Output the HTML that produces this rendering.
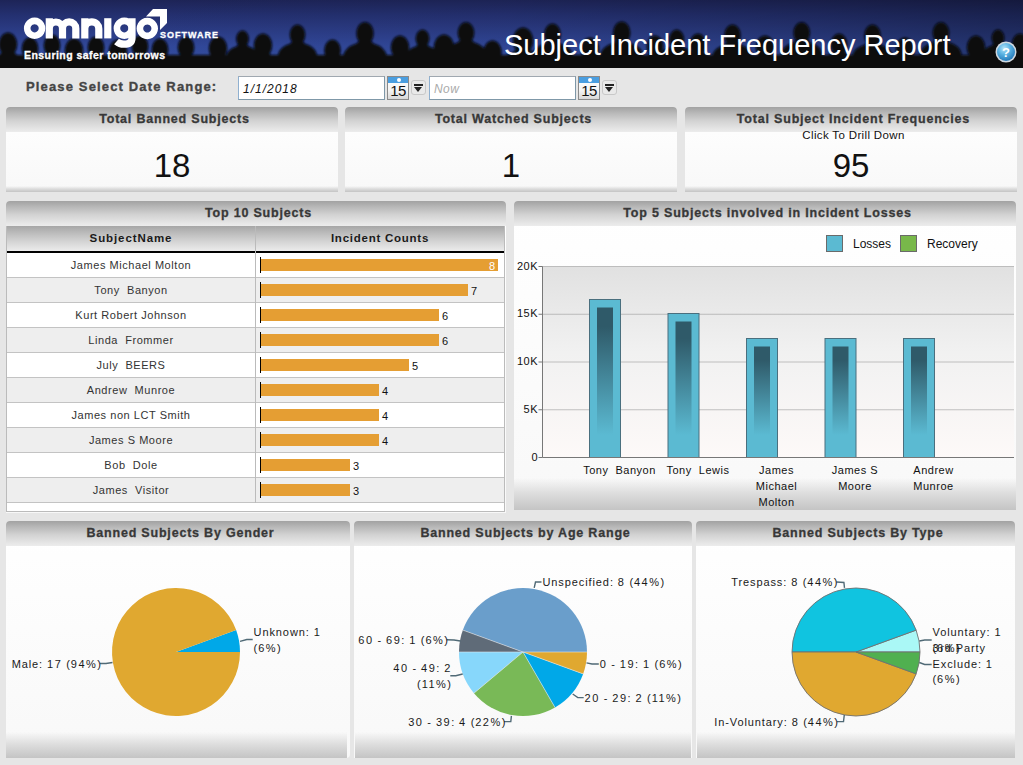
<!DOCTYPE html><html><head><meta charset="utf-8"><style>
*{margin:0;padding:0;box-sizing:border-box}
html,body{width:1023px;height:765px;overflow:hidden;background:#e6e6e6;font-family:"Liberation Sans",sans-serif;color:#222}
.a{position:absolute}
#hdr{position:absolute;left:0;top:0;width:1023px;height:68px;background:linear-gradient(180deg,#1b2462 0%,#27388a 45%,#2d4496 70%,#1a2258 100%);overflow:hidden}
.panel{position:absolute;border-radius:4px 4px 0 0;background:linear-gradient(180deg,#fff 0%,#fbfbfb 60%,#f8f8f8 100%);overflow:hidden}
.ph{position:absolute;left:0;top:0;right:0;height:25px;background:linear-gradient(180deg,#a2a2a2 0%,#b9b9b9 25%,#d2d2d2 55%,#e4e4e4 85%,#ececec 100%);font-weight:bold;font-size:12.5px;letter-spacing:0.8px;color:#383838;-webkit-text-stroke:0.3px #383838;text-align:center;line-height:25px;white-space:pre;padding-left:5px}
.foot{position:absolute;left:0;right:0;bottom:0;background:linear-gradient(180deg,rgba(200,200,200,0) 0%,#dcdcdc 50%,#c4c4c4 100%)}
.big{position:absolute;left:0;right:0;text-align:center;font-size:33px;color:#111;margin-top:1.5px}
.t{position:absolute;white-space:pre;font-size:12px;color:#222}
.row{position:absolute;left:0;width:497px;height:25px;border-bottom:1px solid #c3c3c3}
.nm{position:absolute;left:0;width:248px;top:0;height:24px;line-height:24px;text-align:center;font-size:11px;letter-spacing:0.55px;color:#333;white-space:pre}
.bar{position:absolute;top:6px;height:12px;left:254px;background:#e59e33}
.ax{position:absolute;left:253px;top:4px;width:1px;height:16px;background:#000}
.val{position:absolute;top:0;line-height:24px;font-size:11px;color:#111;padding-top:0.5px}
.cl{position:absolute;font-size:11px;color:#1a1a1a;white-space:pre;line-height:16px;letter-spacing:0.9px}
</style></head><body>
<div id="hdr"><svg class="a" style="left:0;top:0" width="1023" height="68"><defs><linearGradient id="sky" x1="0" y1="0" x2="0" y2="1"><stop offset="0" stop-color="#1d2457"/><stop offset="0.22" stop-color="#243070"/><stop offset="0.45" stop-color="#2b3c85"/><stop offset="0.68" stop-color="#31489a"/><stop offset="1" stop-color="#3552a2"/></linearGradient><linearGradient id="skyh" x1="0" y1="0" x2="1" y2="0"><stop offset="0" stop-color="#000" stop-opacity="0"/><stop offset="0.5" stop-color="#000" stop-opacity="0.04"/><stop offset="0.8" stop-color="#000" stop-opacity="0.18"/><stop offset="1" stop-color="#000" stop-opacity="0.3"/></linearGradient><filter id="bl" x="-5%" y="-20%" width="110%" height="140%"><feGaussianBlur stdDeviation="1"/></filter><radialGradient id="help" cx="0.4" cy="0.3" r="0.75"><stop offset="0" stop-color="#b6e4f8"/><stop offset="0.45" stop-color="#5ab2e2"/><stop offset="1" stop-color="#1f74b6"/></radialGradient></defs><rect width="1023" height="68" fill="url(#sky)"/><rect width="1023" height="68" fill="url(#skyh)"/><g fill="#07080f" filter="url(#bl)"><ellipse cx="8" cy="44.5" rx="9.2" ry="12.0"/><path d="M-16.0,70 L-15.0,68.0 Q-13.0,58.5 -1.0,55.0 L3.0,51.0 L13.0,51.0 L17.0,55.0 Q29.0,58.5 31.0,68.0 L32.0,70 Z"/><ellipse cx="30" cy="48.4" rx="8.3" ry="10.8"/><path d="M8.4,70 L9.3,69.5 Q11.1,60.9 21.9,57.8 L25.5,54.2 L34.5,54.2 L38.1,57.8 Q48.9,60.9 50.7,69.5 L51.6,70 Z"/><ellipse cx="52" cy="45.4" rx="8.3" ry="10.8"/><path d="M30.4,70 L31.3,66.5 Q33.1,57.9 43.9,54.8 L47.5,51.2 L56.5,51.2 L60.1,54.8 Q70.9,57.9 72.7,66.5 L73.6,70 Z"/><ellipse cx="74" cy="50.5" rx="9.2" ry="12.0"/><path d="M50.0,70 L51.0,74.0 Q53.0,64.5 65.0,61.0 L69.0,57.0 L79.0,57.0 L83.0,61.0 Q95.0,64.5 97.0,74.0 L98.0,70 Z"/><ellipse cx="96" cy="47.4" rx="8.3" ry="10.8"/><path d="M74.4,70 L75.3,68.5 Q77.1,59.9 87.9,56.8 L91.5,53.2 L100.5,53.2 L104.1,56.8 Q114.9,59.9 116.7,68.5 L117.6,70 Z"/><ellipse cx="118" cy="51.5" rx="9.2" ry="12.0"/><path d="M94.0,70 L95.0,75.0 Q97.0,65.5 109.0,62.0 L113.0,58.0 L123.0,58.0 L127.0,62.0 Q139.0,65.5 141.0,75.0 L142.0,70 Z"/><ellipse cx="140" cy="46.4" rx="8.3" ry="10.8"/><path d="M118.4,70 L119.3,67.5 Q121.1,58.9 131.9,55.8 L135.5,52.2 L144.5,52.2 L148.1,55.8 Q158.9,58.9 160.7,67.5 L161.6,70 Z"/><ellipse cx="160" cy="49.4" rx="8.3" ry="10.8"/><path d="M138.4,70 L139.3,70.5 Q141.1,61.9 151.9,58.8 L155.5,55.2 L164.5,55.2 L168.1,58.8 Q178.9,61.9 180.7,70.5 L181.6,70 Z"/><ellipse cx="186" cy="47.4" rx="8.3" ry="10.8"/><path d="M164.4,70 L165.3,68.5 Q167.1,59.9 177.9,56.8 L181.5,53.2 L190.5,53.2 L194.1,56.8 Q204.9,59.9 206.7,68.5 L207.6,70 Z"/><ellipse cx="218" cy="48.5" rx="9.2" ry="12.0"/><path d="M194.0,70 L195.0,72.0 Q197.0,62.5 209.0,59.0 L213.0,55.0 L223.0,55.0 L227.0,59.0 Q239.0,62.5 241.0,72.0 L242.0,70 Z"/><ellipse cx="242.5" cy="39.0" rx="6.4" ry="8.4"/><path d="M225.7,70 L226.4,55.5 Q227.8,48.9 236.2,46.4 L239.0,43.6 L246.0,43.6 L248.8,46.4 Q257.2,48.9 258.6,55.5 L259.3,70 Z"/><ellipse cx="263" cy="45.5" rx="9.2" ry="12.0"/><path d="M239.0,70 L240.0,69.0 Q242.0,59.5 254.0,56.0 L258.0,52.0 L268.0,52.0 L272.0,56.0 Q284.0,59.5 286.0,69.0 L287.0,70 Z"/><ellipse cx="297.5" cy="34.8" rx="7.8" ry="10.2"/><path d="M277.1,70 L277.9,54.8 Q279.6,46.7 289.9,43.7 L293.2,40.3 L301.8,40.3 L305.1,43.7 Q315.4,46.7 317.1,54.8 L317.9,70 Z"/><ellipse cx="332.5" cy="50.4" rx="8.3" ry="10.8"/><path d="M310.9,70 L311.8,71.5 Q313.6,62.9 324.4,59.8 L328.0,56.2 L337.0,56.2 L340.6,59.8 Q351.4,62.9 353.2,71.5 L354.1,70 Z"/><ellipse cx="365" cy="33.4" rx="8.7" ry="11.4"/><path d="M342.2,70 L343.1,55.8 Q345.1,46.7 356.4,43.4 L360.2,39.6 L369.8,39.6 L373.6,43.4 Q384.9,46.7 386.9,55.8 L387.8,70 Z"/><ellipse cx="400" cy="47.5" rx="9.2" ry="12.0"/><path d="M376.0,70 L377.0,71.0 Q379.0,61.5 391.0,58.0 L395.0,54.0 L405.0,54.0 L409.0,58.0 Q421.0,61.5 423.0,71.0 L424.0,70 Z"/><ellipse cx="422.5" cy="38.6" rx="6.9" ry="9.0"/><path d="M404.5,70 L405.2,56.2 Q406.8,49.1 415.8,46.5 L418.8,43.5 L426.2,43.5 L429.2,46.5 Q438.2,49.1 439.8,56.2 L440.5,70 Z"/><ellipse cx="444" cy="47.6" rx="10.1" ry="13.2"/><path d="M417.6,70 L418.7,73.5 Q420.9,63.1 434.1,59.2 L438.5,54.8 L449.5,54.8 L453.9,59.2 Q467.1,63.1 469.3,73.5 L470.4,70 Z"/><ellipse cx="466" cy="32.9" rx="8.3" ry="10.8"/><path d="M444.4,70 L445.3,54.0 Q447.1,45.4 457.9,42.3 L461.5,38.7 L470.5,38.7 L474.1,42.3 Q484.9,45.4 486.7,54.0 L487.6,70 Z"/><ellipse cx="492.5" cy="52.5" rx="9.2" ry="12.0"/><path d="M468.5,70 L469.5,76.0 Q471.5,66.5 483.5,63.0 L487.5,59.0 L497.5,59.0 L501.5,63.0 Q513.5,66.5 515.5,76.0 L516.5,70 Z"/><ellipse cx="523" cy="40.6" rx="10.1" ry="13.2"/><path d="M496.6,70 L497.7,66.5 Q499.9,56.1 513.1,52.2 L517.5,47.8 L528.5,47.8 L532.9,52.2 Q546.1,56.1 548.3,66.5 L549.4,70 Z"/><ellipse cx="552.5" cy="34.4" rx="8.3" ry="10.8"/><path d="M530.9,70 L531.8,55.5 Q533.6,46.9 544.4,43.8 L548.0,40.2 L557.0,40.2 L560.6,43.8 Q571.4,46.9 573.2,55.5 L574.1,70 Z"/><ellipse cx="590" cy="49.5" rx="9.2" ry="12.0"/><path d="M566.0,70 L567.0,73.0 Q569.0,63.5 581.0,60.0 L585.0,56.0 L595.0,56.0 L599.0,60.0 Q611.0,63.5 613.0,73.0 L614.0,70 Z"/><ellipse cx="621.7" cy="32.9" rx="8.7" ry="11.4"/><path d="M598.9,70 L599.9,55.3 Q601.8,46.2 613.2,42.9 L617.0,39.1 L626.5,39.1 L630.2,42.9 Q641.7,46.2 643.6,55.3 L644.5,70 Z"/><ellipse cx="655" cy="46.4" rx="8.3" ry="10.8"/><path d="M633.4,70 L634.3,67.5 Q636.1,58.9 646.9,55.8 L650.5,52.2 L659.5,52.2 L663.1,55.8 Q673.9,58.9 675.7,67.5 L676.6,70 Z"/><ellipse cx="676.7" cy="39.2" rx="7.4" ry="9.6"/><path d="M657.5,70 L658.3,58.0 Q659.9,50.4 669.5,47.6 L672.7,44.4 L680.7,44.4 L683.9,47.6 Q693.5,50.4 695.1,58.0 L695.9,70 Z"/><ellipse cx="698" cy="44.4" rx="8.3" ry="10.8"/><path d="M676.4,70 L677.3,65.5 Q679.1,56.9 689.9,53.8 L693.5,50.2 L702.5,50.2 L706.1,53.8 Q716.9,56.9 718.7,65.5 L719.6,70 Z"/><ellipse cx="732.5" cy="35.4" rx="8.3" ry="10.8"/><path d="M710.9,70 L711.8,56.5 Q713.6,47.9 724.4,44.8 L728.0,41.2 L737.0,41.2 L740.6,44.8 Q751.4,47.9 753.2,56.5 L754.1,70 Z"/><ellipse cx="765" cy="47.5" rx="9.2" ry="12.0"/><path d="M741.0,70 L742.0,71.0 Q744.0,61.5 756.0,58.0 L760.0,54.0 L770.0,54.0 L774.0,58.0 Q786.0,61.5 788.0,71.0 L789.0,70 Z"/><ellipse cx="801.7" cy="32.9" rx="8.3" ry="10.8"/><path d="M780.1,70 L781.0,54.0 Q782.8,45.4 793.6,42.3 L797.2,38.7 L806.2,38.7 L809.8,42.3 Q820.6,45.4 822.4,54.0 L823.3,70 Z"/><ellipse cx="839" cy="44.4" rx="8.3" ry="10.8"/><path d="M817.4,70 L818.3,65.5 Q820.1,56.9 830.9,53.8 L834.5,50.2 L843.5,50.2 L847.1,53.8 Q857.9,56.9 859.7,65.5 L860.6,70 Z"/><ellipse cx="872.5" cy="35.4" rx="8.3" ry="10.8"/><path d="M850.9,70 L851.8,56.5 Q853.6,47.9 864.4,44.8 L868.0,41.2 L877.0,41.2 L880.6,44.8 Q891.4,47.9 893.2,56.5 L894.1,70 Z"/><ellipse cx="905" cy="49.5" rx="9.2" ry="12.0"/><path d="M881.0,70 L882.0,73.0 Q884.0,63.5 896.0,60.0 L900.0,56.0 L910.0,56.0 L914.0,60.0 Q926.0,63.5 928.0,73.0 L929.0,70 Z"/><ellipse cx="941" cy="32.9" rx="8.3" ry="10.8"/><path d="M919.4,70 L920.3,54.0 Q922.1,45.4 932.9,42.3 L936.5,38.7 L945.5,38.7 L949.1,42.3 Q959.9,45.4 961.7,54.0 L962.6,70 Z"/><ellipse cx="976" cy="47.5" rx="9.2" ry="12.0"/><path d="M952.0,70 L953.0,71.0 Q955.0,61.5 967.0,58.0 L971.0,54.0 L981.0,54.0 L985.0,58.0 Q997.0,61.5 999.0,71.0 L1000.0,70 Z"/><ellipse cx="998" cy="38.0" rx="6.4" ry="8.4"/><path d="M981.2,70 L981.9,54.5 Q983.3,47.9 991.7,45.4 L994.5,42.6 L1001.5,42.6 L1004.3,45.4 Q1012.7,47.9 1014.1,54.5 L1014.8,70 Z"/><ellipse cx="1020" cy="44.4" rx="8.3" ry="10.8"/><path d="M998.4,70 L999.3,65.5 Q1001.1,56.9 1011.9,53.8 L1015.5,50.2 L1024.5,50.2 L1028.1,53.8 Q1038.9,56.9 1040.7,65.5 L1041.6,70 Z"/><rect x="-5" y="55" width="1033" height="16"/></g><g fill="#fff"><path fill-rule="evenodd" d="M34.6,17.6 a10.7,10.7 0 1 0 0.01,0 Z M34.6,24.2 a4.1,4.1 0 1 0 0.01,0 Z"/></g><g fill="none" stroke="#fff" stroke-width="7.2"><path d="M49.3,38.4 V18.2 M49.3,28.6 A6.6,6.6 0 0 1 62.5,28.6 V38.4 M62.5,28.6 A6.6,6.6 0 0 1 75.8,28.6 V38.4"/><path d="M84.8,38.4 V18.2 M84.8,28.8 A7,7 0 0 1 98.8,28.8 V38.4"/><path d="M107.8,38.4 V18.2"/><path d="M132,18.2 V38 Q132,44.2 124,44.2 Q119.5,44.2 116.5,41.5"/></g><path fill="#fff" fill-rule="evenodd" d="M124.3,17.6 a10.7,10.7 0 1 0 0.01,0 Z M124.3,24.2 a4.1,4.1 0 1 0 0.01,0 Z"/><path fill="#fff" fill-rule="evenodd" d="M147.3,17.8 a10.7,10.7 0 1 0 0.01,0 Z M147.3,24.4 a4.1,4.1 0 1 0 0.01,0 Z"/><path d="M146,16.5 L153,9 L167,9 L167,23 L160,30 L160,16.5 Z" fill="#fff"/><circle cx="1006" cy="52" r="10.5" fill="#cfd8df"/><circle cx="1006" cy="52" r="9" fill="url(#help)"/><text x="1006" y="57" text-anchor="middle" font-family="Liberation Sans" font-weight="bold" font-size="13" fill="#fff">?</text></svg><div class="t" style="left:160px;top:30px;font-size:9px;font-weight:bold;color:#fff;line-height:10px;letter-spacing:1px;-webkit-text-stroke:0.3px #fff">SOFTWARE</div><div class="t" style="left:24px;top:49px;font-size:10.5px;font-weight:bold;color:#fff;line-height:12px;letter-spacing:0.45px;-webkit-text-stroke:0.3px #fff">Ensuring safer tomorrows</div><div class="t" style="left:504px;top:28px;font-size:29px;color:#fff;line-height:34px">Subject Incident Frequency Report</div></div>
<div class="t" style="left:26px;top:78.5px;font-size:13px;line-height:16px;font-weight:bold;color:#444;letter-spacing:1.15px;-webkit-text-stroke:0.35px #444">Please Select Date Range:</div>
<div class="a" style="left:238px;top:76px;width:147px;height:24px;background:#fff;border:1px solid #7f98a8;border-left-color:#8fb0d0;border-top-color:#a0a8b0"></div><div class="t" style="left:243px;top:80.5px;font-size:12px;letter-spacing:1px;font-style:italic;color:#111;line-height:16px">1/1/2018</div><div class="a" style="left:387px;top:76px;width:22px;height:24px;border:1px solid #8a8a8a;background:linear-gradient(180deg,#fff 0%,#f4f4f4 60%,#d8d8d8 100%)"></div><div class="a" style="left:388px;top:77px;width:20px;height:6px;background:#4a9ee0"></div><div class="a" style="left:397px;top:78px;width:4px;height:4px;border-radius:2px;background:#fff"></div><div class="t" style="left:388px;top:83px;width:20px;text-align:center;font-size:15px;color:#111;line-height:16px;letter-spacing:-0.5px">15</div><div class="a" style="left:411px;top:80px;width:15px;height:15px;border:1px solid #c8c8c8;border-radius:3px;background:#e9e9e9"></div><div class="a" style="left:414px;top:84px;width:9px;height:1.6px;background:#222"></div><div class="a" style="left:414px;top:87px;width:0;height:0;border-left:4.5px solid transparent;border-right:4.5px solid transparent;border-top:5px solid #222"></div><div class="a" style="left:429px;top:76px;width:147px;height:24px;background:#fff;border:1px solid #7f98a8;border-left-color:#8fb0d0;border-top-color:#a0a8b0"></div><div class="t" style="left:434px;top:80.5px;font-size:12px;letter-spacing:0.4px;font-style:italic;color:#aaa;line-height:16px">Now</div><div class="a" style="left:578px;top:76px;width:22px;height:24px;border:1px solid #8a8a8a;background:linear-gradient(180deg,#fff 0%,#f4f4f4 60%,#d8d8d8 100%)"></div><div class="a" style="left:579px;top:77px;width:20px;height:6px;background:#4a9ee0"></div><div class="a" style="left:588px;top:78px;width:4px;height:4px;border-radius:2px;background:#fff"></div><div class="t" style="left:579px;top:83px;width:20px;text-align:center;font-size:15px;color:#111;line-height:16px;letter-spacing:-0.5px">15</div><div class="a" style="left:602px;top:80px;width:15px;height:15px;border:1px solid #c8c8c8;border-radius:3px;background:#e9e9e9"></div><div class="a" style="left:605px;top:84px;width:9px;height:1.6px;background:#222"></div><div class="a" style="left:605px;top:87px;width:0;height:0;border-left:4.5px solid transparent;border-right:4.5px solid transparent;border-top:5px solid #222"></div>
<div class="panel" style="left:6px;top:107px;width:332px;height:85px"><div class="ph">Total Banned Subjects</div><div class="big" style="top:38px">18</div><div class="foot" style="height:6px"></div></div>
<div class="panel" style="left:345px;top:107px;width:332px;height:85px"><div class="ph">Total Watched Subjects</div><div class="big" style="top:38px">1</div><div class="foot" style="height:6px"></div></div>
<div class="panel" style="left:685px;top:107px;width:332px;height:85px"><div class="ph">Total Subject Incident Frequencies</div><div class="t" style="left:5px;right:0;top:22px;text-align:center;font-size:11.5px;letter-spacing:0.35px;color:#111">Click To Drill Down</div><div class="big" style="top:38px">95</div><div class="foot" style="height:6px"></div></div>
<div class="panel" style="left:6px;top:201px;width:500px;height:312px"><div class="ph">Top 10 Subjects</div><div class="a" style="left:0;top:25px;width:499px;height:286px;background:#fff;border:1px solid #bbb;border-top:0"></div><div class="a" style="left:1px;top:25px;width:497px;height:27px;background:linear-gradient(180deg,#a6a6a6 0%,#bdbdbd 30%,#d6d6d6 65%,#ececec 100%);border-bottom:2px solid #000"></div><div class="a" style="left:249px;top:25px;width:1px;height:276px;background:#bbb"></div><div class="t" style="left:1px;top:25px;width:248px;line-height:25px;text-align:center;font-weight:bold;font-size:11.5px;letter-spacing:0.9px;color:#1a1a1a">SubjectName</div><div class="t" style="left:250px;top:25px;width:248px;line-height:25px;text-align:center;font-weight:bold;font-size:11.5px;letter-spacing:0.75px;color:#1a1a1a">Incident Counts</div><div class="row" style="left:1px;top:52px;background:#fff"><div class="nm">James Michael Molton</div><div class="ax"></div><div class="bar" style="width:237px"></div><div class="val" style="left:482px;color:#fff">8</div></div><div class="row" style="left:1px;top:77px;background:#eeeeee"><div class="nm">Tony  Banyon</div><div class="ax"></div><div class="bar" style="width:207px"></div><div class="val" style="left:464px">7</div></div><div class="row" style="left:1px;top:102px;background:#fff"><div class="nm">Kurt Robert Johnson</div><div class="ax"></div><div class="bar" style="width:178px"></div><div class="val" style="left:435px">6</div></div><div class="row" style="left:1px;top:127px;background:#eeeeee"><div class="nm">Linda  Frommer</div><div class="ax"></div><div class="bar" style="width:178px"></div><div class="val" style="left:435px">6</div></div><div class="row" style="left:1px;top:152px;background:#fff"><div class="nm">July  BEERS</div><div class="ax"></div><div class="bar" style="width:148px"></div><div class="val" style="left:405px">5</div></div><div class="row" style="left:1px;top:177px;background:#eeeeee"><div class="nm">Andrew  Munroe</div><div class="ax"></div><div class="bar" style="width:118px"></div><div class="val" style="left:375px">4</div></div><div class="row" style="left:1px;top:202px;background:#fff"><div class="nm">James non LCT Smith</div><div class="ax"></div><div class="bar" style="width:118px"></div><div class="val" style="left:375px">4</div></div><div class="row" style="left:1px;top:227px;background:#eeeeee"><div class="nm">James S Moore</div><div class="ax"></div><div class="bar" style="width:118px"></div><div class="val" style="left:375px">4</div></div><div class="row" style="left:1px;top:252px;background:#fff"><div class="nm">Bob  Dole</div><div class="ax"></div><div class="bar" style="width:89px"></div><div class="val" style="left:346px">3</div></div><div class="row" style="left:1px;top:277px;background:#eeeeee"><div class="nm">James  Visitor</div><div class="ax"></div><div class="bar" style="width:89px"></div><div class="val" style="left:346px">3</div></div><div class="a" style="left:249px;top:52px;width:1px;height:250px;background:#bbb"></div><div class="foot" style="height:0px"></div></div>
<div class="panel" style="left:514px;top:201px;width:502px;height:309px"><div class="foot" style="height:32px"></div><svg class="a" style="left:0;top:0" width="502" height="310"><defs><linearGradient id="pbg" x1="0" y1="0" x2="0" y2="1"><stop offset="0" stop-color="#e1e1e1"/><stop offset="0.45" stop-color="#f1f1f1"/><stop offset="1" stop-color="#fdf9f8"/></linearGradient><linearGradient id="inn" x1="0" y1="0" x2="0" y2="1"><stop offset="0" stop-color="#2f5a69"/><stop offset="0.15" stop-color="#2f5a69"/><stop offset="1" stop-color="#5bbad2"/></linearGradient></defs><rect x="28.5" y="65.5" width="471.5" height="191.0" fill="url(#pbg)"/><line x1="28.5" y1="65.5" x2="500" y2="65.5" stroke="#8a8a8a" stroke-width="1" stroke-dasharray="1,1"/><line x1="24.5" y1="65.5" x2="28.5" y2="65.5" stroke="#777" stroke-width="1"/><line x1="28.5" y1="113.25" x2="500" y2="113.25" stroke="#8a8a8a" stroke-width="1" stroke-dasharray="1,1"/><line x1="24.5" y1="113.25" x2="28.5" y2="113.25" stroke="#777" stroke-width="1"/><line x1="28.5" y1="161.0" x2="500" y2="161.0" stroke="#8a8a8a" stroke-width="1" stroke-dasharray="1,1"/><line x1="24.5" y1="161.0" x2="28.5" y2="161.0" stroke="#777" stroke-width="1"/><line x1="28.5" y1="208.75" x2="500" y2="208.75" stroke="#8a8a8a" stroke-width="1" stroke-dasharray="1,1"/><line x1="24.5" y1="208.75" x2="28.5" y2="208.75" stroke="#777" stroke-width="1"/><line x1="24.5" y1="256.5" x2="28.5" y2="256.5" stroke="#777" stroke-width="1"/><rect x="75.5" y="98.5" width="31" height="158.0" fill="#5bbad2" stroke="#4a6f7e" stroke-width="1"/><rect x="83.0" y="106.5" width="16" height="127.5" fill="url(#inn)"/><rect x="154.0" y="112.5" width="31" height="144.0" fill="#5bbad2" stroke="#4a6f7e" stroke-width="1"/><rect x="161.5" y="120.5" width="16" height="113.5" fill="url(#inn)"/><rect x="232.5" y="137.5" width="31" height="119.0" fill="#5bbad2" stroke="#4a6f7e" stroke-width="1"/><rect x="240.0" y="145.5" width="16" height="88.5" fill="url(#inn)"/><rect x="311.0" y="137.5" width="31" height="119.0" fill="#5bbad2" stroke="#4a6f7e" stroke-width="1"/><rect x="318.5" y="145.5" width="16" height="88.5" fill="url(#inn)"/><rect x="389.5" y="137.5" width="31" height="119.0" fill="#5bbad2" stroke="#4a6f7e" stroke-width="1"/><rect x="397.0" y="145.5" width="16" height="88.5" fill="url(#inn)"/><line x1="28.5" y1="65.5" x2="28.5" y2="256.5" stroke="#777" stroke-width="1"/><line x1="28.5" y1="256.5" x2="500" y2="256.5" stroke="#777" stroke-width="1"/></svg><div class="t" style="right:478px;top:57.5px;line-height:14px;font-size:11px;letter-spacing:0.5px;color:#111;text-align:right">20K</div><div class="t" style="right:478px;top:105.2px;line-height:14px;font-size:11px;letter-spacing:0.5px;color:#111;text-align:right">15K</div><div class="t" style="right:478px;top:153.0px;line-height:14px;font-size:11px;letter-spacing:0.5px;color:#111;text-align:right">10K</div><div class="t" style="right:478px;top:200.8px;line-height:14px;font-size:11px;letter-spacing:0.5px;color:#111;text-align:right">5K</div><div class="t" style="right:478px;top:248.5px;line-height:14px;font-size:11px;letter-spacing:0.5px;color:#111;text-align:right">0</div><div class="t" style="left:55.5px;width:100px;text-align:center;top:261px;line-height:16px;font-size:11px;letter-spacing:0.5px;color:#111">Tony  Banyon</div><div class="t" style="left:134.0px;width:100px;text-align:center;top:261px;line-height:16px;font-size:11px;letter-spacing:0.5px;color:#111">Tony  Lewis</div><div class="t" style="left:212.5px;width:100px;text-align:center;top:261px;line-height:16px;font-size:11px;letter-spacing:0.5px;color:#111">James</div><div class="t" style="left:212.5px;width:100px;text-align:center;top:277px;line-height:16px;font-size:11px;letter-spacing:0.5px;color:#111">Michael</div><div class="t" style="left:212.5px;width:100px;text-align:center;top:293px;line-height:16px;font-size:11px;letter-spacing:0.5px;color:#111">Molton</div><div class="t" style="left:291.0px;width:100px;text-align:center;top:261px;line-height:16px;font-size:11px;letter-spacing:0.5px;color:#111">James S</div><div class="t" style="left:291.0px;width:100px;text-align:center;top:277px;line-height:16px;font-size:11px;letter-spacing:0.5px;color:#111">Moore</div><div class="t" style="left:369.5px;width:100px;text-align:center;top:261px;line-height:16px;font-size:11px;letter-spacing:0.5px;color:#111">Andrew</div><div class="t" style="left:369.5px;width:100px;text-align:center;top:277px;line-height:16px;font-size:11px;letter-spacing:0.5px;color:#111">Munroe</div><div class="a" style="left:312px;top:34px;width:17px;height:17px;background:#5bbad2;border:1px solid #6a6a6a"></div><div class="t" style="left:339px;top:35px;line-height:16px;font-size:12px;color:#111">Losses</div><div class="a" style="left:386px;top:34px;width:17px;height:17px;background:#78b84a;border:1px solid #6a6a6a"></div><div class="t" style="left:413px;top:35px;line-height:16px;font-size:12px;color:#111">Recovery</div><div class="ph">Top 5 Subjects involved in Incident Losses</div></div>
<div class="panel" style="left:6px;top:521px;width:344px;height:237px;border-bottom-right-radius:4px"><div class="foot" style="height:26px;left:0px;right:3px"></div><svg class="a" style="left:0;top:0" width="344" height="237"><path d="M170,131 L234.00,131.00 A64,64 0 0 0 230.14,109.11 Z" fill="#00a8e8" stroke="none" stroke-width="0"/><path d="M170,131 L230.14,109.11 A64,64 0 1 0 234.00,131.00 Z" fill="#e0a830" stroke="none" stroke-width="0"/><polyline points="94.0,142.5 100.0,142.5 106.5,141.5" fill="none" stroke="#506a76" stroke-width="1.4"/><polyline points="234.0,120.4 240.8,118.5 246.7,118.5" fill="none" stroke="#506a76" stroke-width="1.4"/></svg><div class="cl" style="right:248.1px;top:135.2px;text-align:right">Male: <span style="letter-spacing:1.5px">17</span> (<span style="letter-spacing:1.5px">94%</span>)</div><div class="cl" style="left:247.6px;top:103.2px">Unknown: <span style="letter-spacing:1.5px">1</span></div><div class="cl" style="left:247.6px;top:119.2px">(<span style="letter-spacing:1.5px">6%</span>)</div><div class="ph">Banned Subjects By Gender</div></div>
<div class="panel" style="left:354px;top:521px;width:338px;height:237px;border-bottom-right-radius:0px"><div class="foot" style="height:26px;left:1px;right:1px"></div><svg class="a" style="left:0;top:0" width="338" height="237"><path d="M169,131 L233.00,131.00 A64,64 0 0 0 108.86,109.11 Z" fill="#6a9ecb" stroke="none" stroke-width="0"/><path d="M169,131 L108.86,109.11 A64,64 0 0 0 105.00,131.00 Z" fill="#5f6b78" stroke="none" stroke-width="0"/><path d="M169,131 L105.00,131.00 A64,64 0 0 0 119.97,172.14 Z" fill="#87d7fb" stroke="none" stroke-width="0"/><path d="M169,131 L119.97,172.14 A64,64 0 0 0 201.00,186.43 Z" fill="#79b957" stroke="none" stroke-width="0"/><path d="M169,131 L201.00,186.43 A64,64 0 0 0 229.14,152.89 Z" fill="#00a8e8" stroke="none" stroke-width="0"/><path d="M169,131 L229.14,152.89 A64,64 0 0 0 233.00,131.00 Z" fill="#e0a830" stroke="none" stroke-width="0"/><line x1="169" y1="131" x2="233.00" y2="131.00" stroke="#dde6ee" stroke-width="0.6"/><line x1="169" y1="131" x2="108.86" y2="109.11" stroke="#dde6ee" stroke-width="0.6"/><line x1="169" y1="131" x2="105.00" y2="131.00" stroke="#dde6ee" stroke-width="0.6"/><line x1="169" y1="131" x2="119.97" y2="172.14" stroke="#dde6ee" stroke-width="0.6"/><line x1="169" y1="131" x2="201.00" y2="186.43" stroke="#dde6ee" stroke-width="0.6"/><line x1="169" y1="131" x2="229.14" y2="152.89" stroke="#dde6ee" stroke-width="0.6"/><polyline points="180.2,66.8 181.5,61.0 187.5,61.0" fill="none" stroke="#506a76" stroke-width="1.4"/><polyline points="92.7,118.8 100.0,119.0 106.4,120.0" fill="none" stroke="#506a76" stroke-width="1.4"/><polyline points="96.3,154.8 101.8,154.8 108.7,153.0" fill="none" stroke="#506a76" stroke-width="1.4"/><polyline points="150.0,200.6 156.8,200.6 157.4,194.9" fill="none" stroke="#506a76" stroke-width="1.4"/><polyline points="232.5,141.9 238.0,143.0 244.8,143.0" fill="none" stroke="#506a76" stroke-width="1.4"/><polyline points="218.7,173.0 223.8,176.6 229.7,176.6" fill="none" stroke="#506a76" stroke-width="1.4"/></svg><div class="cl" style="left:188.5px;top:53.2px">Unspecified: <span style="letter-spacing:1.5px">8</span> (<span style="letter-spacing:1.5px">44%</span>)</div><div class="cl" style="right:243.1px;top:110.8px;text-align:right"><span style="letter-spacing:1.5px">60</span> - <span style="letter-spacing:1.5px">69</span>: <span style="letter-spacing:1.5px">1</span> (<span style="letter-spacing:1.5px">6%</span>)</div><div class="cl" style="right:240.2px;top:139.2px;text-align:right"><span style="letter-spacing:1.5px">40</span> - <span style="letter-spacing:1.5px">49</span>: <span style="letter-spacing:1.5px">2</span></div><div class="cl" style="right:240.1px;top:155.2px;text-align:right">(<span style="letter-spacing:1.5px">11%</span>)</div><div class="cl" style="right:185.7px;top:193.2px;text-align:right"><span style="letter-spacing:1.5px">30</span> - <span style="letter-spacing:1.5px">39</span>: <span style="letter-spacing:1.5px">4</span> (<span style="letter-spacing:1.5px">22%</span>)</div><div class="cl" style="left:245.7px;top:134.6px"><span style="letter-spacing:1.5px">0</span> - <span style="letter-spacing:1.5px">19</span>: <span style="letter-spacing:1.5px">1</span> (<span style="letter-spacing:1.5px">6%</span>)</div><div class="cl" style="left:230.6px;top:169.0px"><span style="letter-spacing:1.5px">20</span> - <span style="letter-spacing:1.5px">29</span>: <span style="letter-spacing:1.5px">2</span> (<span style="letter-spacing:1.5px">11%</span>)</div><div class="ph">Banned Subjects by Age Range</div></div>
<div class="panel" style="left:696px;top:521px;width:319px;height:237px;border-bottom-right-radius:0px"><div class="foot" style="height:26px;left:1px;right:0px"></div><svg class="a" style="left:0;top:0" width="319" height="237"><path d="M160,131 L224.00,131.00 A64,64 0 0 0 220.14,109.11 Z" fill="#aaf8f6" stroke="#707070" stroke-width="0.9"/><path d="M160,131 L220.14,109.11 A64,64 0 0 0 96.00,131.00 Z" fill="#10c4e0" stroke="#707070" stroke-width="0.9"/><path d="M160,131 L96.00,131.00 A64,64 0 0 0 220.14,152.89 Z" fill="#e0a830" stroke="#707070" stroke-width="0.9"/><path d="M160,131 L220.14,152.89 A64,64 0 0 0 224.00,131.00 Z" fill="#50b050" stroke="#707070" stroke-width="0.9"/><polyline points="140.5,61.0 147.9,61.5 148.5,66.8" fill="none" stroke="#506a76" stroke-width="1.4"/><polyline points="223.3,120.0 228.7,119.0 235.7,119.0" fill="none" stroke="#506a76" stroke-width="1.4"/><polyline points="223.3,141.5 228.7,143.5 235.7,143.5" fill="none" stroke="#506a76" stroke-width="1.4"/><polyline points="141.0,200.6 147.5,200.6 148.3,193.9" fill="none" stroke="#506a76" stroke-width="1.4"/></svg><div class="cl" style="right:176.6px;top:53.4px;text-align:right">Trespass: <span style="letter-spacing:1.5px">8</span> (<span style="letter-spacing:1.5px">44%</span>)</div><div class="cl" style="left:236.5px;top:102.8px">Voluntary: <span style="letter-spacing:1.5px">1</span></div><div class="cl" style="left:236.5px;top:119.0px">(<span style="letter-spacing:1.5px">6%</span>)</div><div class="cl" style="left:236.5px;top:119.0px"><span style="letter-spacing:1.5px">3</span>rd Party</div><div class="cl" style="left:236.5px;top:134.6px">Exclude: <span style="letter-spacing:1.5px">1</span></div><div class="cl" style="left:236.5px;top:150.2px">(<span style="letter-spacing:1.5px">6%</span>)</div><div class="cl" style="right:176.1px;top:193.0px;text-align:right">In-Voluntary: <span style="letter-spacing:1.5px">8</span> (<span style="letter-spacing:1.5px">44%</span>)</div><div class="ph">Banned Subjects By Type</div></div>
</body></html>
